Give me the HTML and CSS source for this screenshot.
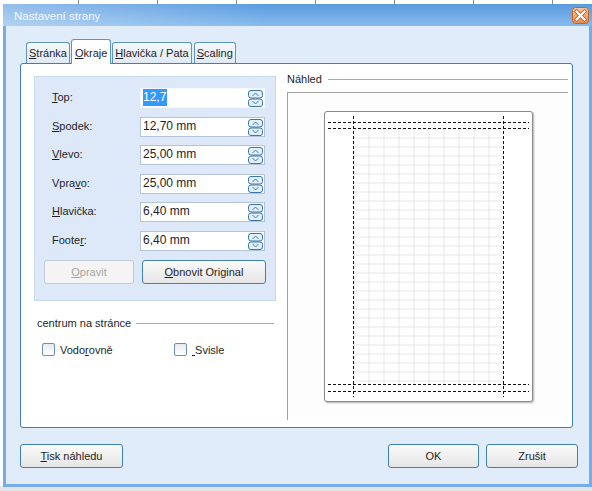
FILE: index.html
```html
<!DOCTYPE html>
<html lang="cs">
<head>
    <meta charset="UTF-8">
    <title>Nastavení strany</title>
    <link rel="stylesheet" href="styles.css">
</head>
<body>

<div class="desktop">
    <div class="window">
        <div class="titlebar">
            <span class="title">Nastavení strany</span>
            <span class="close-btn">
                <svg width="17" height="17" viewBox="0 0 17 17">
                    <defs>
                        <linearGradient id="cg" x1="0" y1="0" x2="0" y2="1">
                            <stop offset="0" stop-color="#f9c9a0"/>
                            <stop offset="1" stop-color="#e98a4c"/>
                        </linearGradient>
                    </defs>
                    <rect x="0.5" y="0.5" width="16" height="16" rx="3" fill="url(#cg)" stroke="#c0662a"/>
                    <path d="M4.5 4.5 L12.5 12.5 M12.5 4.5 L4.5 12.5" stroke="#c46a34" stroke-width="4" stroke-linecap="square"/>
                    <path d="M4.5 4.5 L12.5 12.5 M12.5 4.5 L4.5 12.5" stroke="#fff" stroke-width="2" stroke-linecap="square"/>
                </svg>
            </span>
        </div>

        <div class="dlg-body">
            <div class="tabs">
                <div class="tab"><u>S</u>tránka</div>
                <div class="tab active"><u>O</u>kraje</div>
                <div class="tab"><u>H</u>lavička / Pata</div>
                <div class="tab"><u>S</u>caling</div>
            </div>

            <div class="tab-panel">
                <div class="left-col">
                    <div class="margins-box">
                        <div class="field-row">
                            <label><u>T</u>op:</label>
                            <div class="spin-input focused"><span class="sel">12,7</span><span class="spin"></span></div>
                        </div>
                        <div class="field-row">
                            <label><u>S</u>podek:</label>
                            <div class="spin-input">12,70 mm<span class="spin"></span></div>
                        </div>
                        <div class="field-row">
                            <label><u>V</u>levo:</label>
                            <div class="spin-input">25,00 mm<span class="spin"></span></div>
                        </div>
                        <div class="field-row">
                            <label>Vpra<u>v</u>o:</label>
                            <div class="spin-input">25,00 mm<span class="spin"></span></div>
                        </div>
                        <div class="field-row">
                            <label><u>H</u>lavička:</label>
                            <div class="spin-input">6,40 mm<span class="spin"></span></div>
                        </div>
                        <div class="field-row">
                            <label>Foote<u>r</u>:</label>
                            <div class="spin-input">6,40 mm<span class="spin"></span></div>
                        </div>
                        <div class="box-buttons">
                            <button class="btn disabled btn-fix"><u>O</u>pravit</button>
                            <button class="btn btn-reset"><u>O</u>bnovit Original</button>
                        </div>
                    </div>

                    <div class="section-head">centrum na stránce</div>
                    <div class="checks">
                        <div class="check"><span class="box"></span><span>Vodo<u>r</u>ovně</span></div>
                        <div class="check"><span class="box"></span><span><u>&nbsp;</u>Svisle</span></div>
                    </div>
                </div>

                <div class="right-col">
                    <div class="section-head">Náhled</div>
                    <div class="preview">
                        <div class="page">
                            <svg width="207" height="289" viewBox="0 0 207 289">
                                <defs>
                                    <pattern id="grid" x="28.5" y="16.5" width="15" height="9" patternUnits="userSpaceOnUse">
                                        <path d="M0 0.5 H15 M0.5 0 V9" stroke="#e6e6e6" fill="none"/>
                                    </pattern>
                                </defs>
                                <rect x="28.5" y="16.5" width="150" height="256" fill="url(#grid)"/>
                                <g stroke="#111" stroke-dasharray="3 2" fill="none">
                                    <path d="M3 10.5 H204 M3 16.5 H204 M3 272.5 H204 M3 279.5 H204"/>
                                    <path d="M28.5 4 V285 M178.5 4 V285"/>
                                </g>
                            </svg>
                        </div>
                    </div>
                </div>
            </div>

            <div class="bottom-buttons">
                <button class="btn btn-print"><u>T</u>isk náhledu</button>
                <div class="right-buttons">
                    <button class="btn btn-ok">OK</button>
                    <button class="btn btn-cancel">Zrušit</button>
                </div>
            </div>
        </div>
    </div>
</div>

</body>
</html>
```

FILE: styles.css
```css
html, body {
    margin: 0;
    padding: 0;
}
body {
    width: 592px;
    height: 491px;
    overflow: hidden;
    font-family: "Liberation Sans", Arial, sans-serif;
    font-size: 11px;
    color: #1e1e1e;
}
.desktop {
    position: relative;
    width: 592px;
    height: 491px;
    background:
        linear-gradient(to bottom, transparent 486px, #e4e4e4 486px),
        repeating-linear-gradient(to right, transparent 0 78px, #8a8a8a 78px 79px),
        #ffffff;
}
/* dialog window */
.window {
    position: absolute;
    left: 3px;
    top: 4px;
    width: 589px;
    height: 483px;
    box-sizing: border-box;
    border: 3px solid #74ade9;
    border-top: none;
    background-color: #e1ecfb;
    display: flex;
    flex-direction: column;
}
.titlebar {
    height: 22px;
    margin: 0 -3px;
    display: flex;
    align-items: center;
    justify-content: space-between;
    padding: 0 3px 0 11px;
    background:
        linear-gradient(to right, rgba(255,255,255,0.35), rgba(255,255,255,0) 45%),
        linear-gradient(#5a9be0, #87bbec);
}
.title {
    color: #f4f8ff;
    font-size: 11.5px;
    margin-top: 1px;
}
.close-btn {
    display: flex;
    width: 17px;
    height: 17px;
}
.dlg-body {
    flex: 1;
    padding: 13px 11px 0 14px;
}
/* tabs */
.tabs {
    display: flex;
    align-items: flex-end;
    gap: 2px;
    height: 24px;
    padding-left: 6px;
    position: relative;
    z-index: 2;
}
.tab {
    height: 21px;
    box-sizing: border-box;
    padding: 0 2px;
    line-height: 20px;
    border: 1px solid #5d95c2;
    border-bottom: none;
    border-radius: 3px 3px 0 0;
    background: linear-gradient(#f6f9fd, #dfe9f6);
    white-space: nowrap;
}
.tab.active {
    height: 25px;
    margin-bottom: -1px;
    margin-left: -1px;
    margin-right: -1px;
    padding: 0 3px;
    line-height: 26px;
    background: #ffffff;
}
.tab-panel {
    width: 553px;
    height: 365px;
    box-sizing: border-box;
    border: 1px solid #3e80b2;
    border-radius: 3px;
    background-color: #ffffff;
    display: flex;
    gap: 11px;
    padding: 8px 4px 0 13px;
}
.left-col {
    width: 242px;
    margin-top: 4px;
}
.margins-box {
    height: 225px;
    box-sizing: border-box;
    border: 1px solid #c9d9ec;
    background-color: #dde9f8;
    padding: 11px 0 0 9px;
}
.field-row {
    display: flex;
    align-items: center;
    height: 20px;
    margin-bottom: 8.6px;
}
.field-row label {
    width: 88px;
    margin-left: 8px;
    margin-top: -2px;
}
.spin-input {
    position: relative;
    width: 125px;
    height: 20px;
    box-sizing: border-box;
    border: 1px solid #b3c4d8;
    background-color: #ffffff;
    padding-left: 2px;
    line-height: 16px;
    font-size: 12px;
}
.spin-input.focused {
    border-color: #f4f7fb;
}
.sel {
    background-color: #3399ff;
    color: #ffffff;
    padding: 1px 1px 2px 0;
}
.spin {
    position: absolute;
    right: 1px;
    top: 1px;
    width: 15px;
    height: 17px;
    background: url("data:image/svg+xml;utf8,<svg xmlns='http://www.w3.org/2000/svg' width='15' height='17'><rect x='0.5' y='0.5' width='14' height='7.5' rx='2.5' fill='%23e3f0fc' stroke='%233a77a8'/><rect x='0.5' y='9' width='14' height='7.5' rx='2.5' fill='%23e3f0fc' stroke='%233a77a8'/><path d='M4.5 6 L7.5 3 L10.5 6 M4.5 11 L7.5 14 L10.5 11' fill='none' stroke='%233a77a8'/></svg>") no-repeat;
}
.box-buttons {
    display: flex;
    gap: 8px;
    margin-top: 8.4px;
}
.btn {
    font-family: inherit;
    font-size: 11px;
    color: #1e1e1e;
    height: 24px;
    box-sizing: border-box;
    border: 1px solid #3e80b2;
    border-radius: 3px;
    background: linear-gradient(#fafafa, #e6e6e6);
    padding: 0;
    cursor: pointer;
}
.btn-fix {
    width: 90px;
}
.btn-reset {
    width: 124px;
}
.btn.disabled {
    color: #a6a6a6;
    border-color: #c3ccd6;
    background: #f4f4f4;
}
.section-head {
    display: flex;
    align-items: center;
    gap: 5px;
    height: 14px;
}
.section-head::after {
    content: "";
    flex: 1;
    border-top: 1px solid #a9a9a9;
}
.left-col .section-head {
    margin: 15px 2px 0 3px;
}
.checks {
    display: flex;
    margin-top: 13px;
    padding-left: 8px;
}
.check {
    display: flex;
    align-items: center;
    gap: 5px;
    flex-shrink: 0;
}
.check:first-child {
    width: 132px;
}
.check .box {
    width: 13px;
    height: 13px;
    box-sizing: border-box;
    border: 1px solid #6e8fb3;
    border-radius: 2px;
    background: linear-gradient(#e5ebf2, #ffffff);
}
/* preview */
.right-col {
    flex: 1;
}
.right-col .section-head {
    gap: 6px;
}
.preview {
    margin-top: 6px;
    height: 328px;
    box-sizing: border-box;
    border-left: 1px solid #a0a0a0;
    border-top: 1px solid #a0a0a0;
    background-color: #fdfdfd;
    display: flex;
    align-items: center;
    justify-content: center;
}
.page {
    width: 209px;
    height: 291px;
    box-sizing: border-box;
    border: 1px solid #8a8a8a;
    border-radius: 3px;
    background-color: #ffffff;
    box-shadow: 1px 1px 2px rgba(0,0,0,0.3);
}
.page svg {
    display: block;
}
/* bottom row */
.bottom-buttons {
    display: flex;
    justify-content: space-between;
    margin-top: 16px;
}
.btn-print {
    width: 103px;
}
.right-buttons {
    display: flex;
    gap: 7px;
}
.btn-ok {
    width: 91px;
}
.btn-cancel {
    width: 92px;
}
```
